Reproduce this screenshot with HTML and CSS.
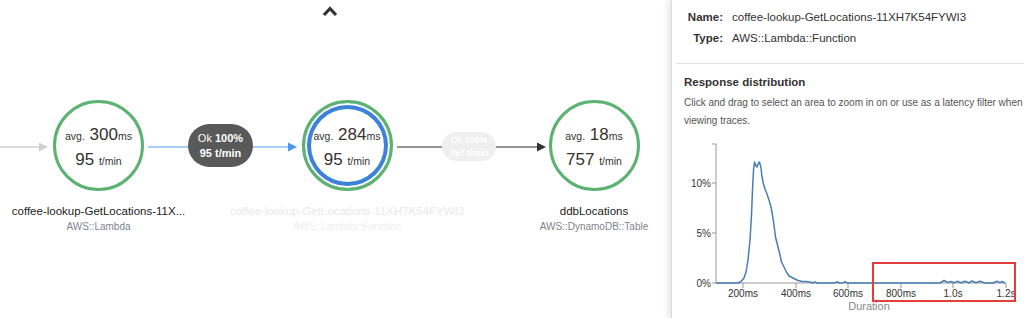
FILE: index.html
```html
<!DOCTYPE html>
<html>
<head>
  <meta charset="utf-8">
  <link rel="stylesheet" href="styles.css">
</head>
<body>
  <div class="app">
    <div class="map">
      <svg class="edges" width="671" height="318">
        <line x1="0" y1="147" x2="42" y2="147" stroke="#d2d2d2" stroke-width="1.5"/>
        <polygon points="39,142.5 48,147 39,151.5" fill="#cfcfcf"/>
        <line x1="148" y1="147" x2="290" y2="147" stroke="#a8cdf6" stroke-width="2"/>
        <polygon points="288,142.5 297,147 288,151.5" fill="#4b95ec"/>
        <line x1="397" y1="147" x2="539" y2="147" stroke="#707070" stroke-width="1.3"/>
        <polygon points="537,142.5 546,147 537,151.5" fill="#333"/>
      </svg>

      <div class="collapse">
        <svg width="16" height="12" viewBox="0 0 16 12">
          <polyline points="2,10 8,3.5 14,10" fill="none" stroke="#333" stroke-width="3.2"/>
        </svg>
      </div>

      <div class="node node-client">
        <div class="ring">
          <div class="stat"><small>avg.</small> 300<small>ms</small></div>
          <div class="stat">95 <small>t/min</small></div>
        </div>
        <div class="name">coffee-lookup-GetLocations-11X...</div>
        <div class="type">AWS::Lambda</div>
      </div>

      <div class="node node-function">
        <div class="ring ring-active">
          <div class="stat"><small>avg.</small> 284<small>ms</small></div>
          <div class="stat">95 <small>t/min</small></div>
        </div>
        <div class="name faded">coffee-lookup-GetLocations-11XH7K54FYWI3</div>
        <div class="type faded">AWS::Lambda::Function</div>
      </div>

      <div class="node node-table">
        <div class="ring">
          <div class="stat"><small>avg.</small> 18<small>ms</small></div>
          <div class="stat">757 <small>t/min</small></div>
        </div>
        <div class="name">ddbLocations</div>
        <div class="type">AWS::DynamoDB::Table</div>
      </div>

      <div class="badge badge-lambda">
        <div>Ok <b>100%</b><br><b>95 t/min</b></div>
      </div>
      <div class="badge badge-table">
        <div>Ok <b>100%</b><br><b>757 t/min</b></div>
      </div>
    </div>

    <div class="panel">
      <div class="props">
        <div class="prop-label">Name:</div>
        <div class="prop-value">coffee-lookup-GetLocations-11XH7K54FYWI3</div>
        <div class="prop-label">Type:</div>
        <div class="prop-value">AWS::Lambda::Function</div>
      </div>

      <div class="dist">
        <h3>Response distribution</h3>
        <p>Click and drag to select an area to zoom in on or use as a latency filter when viewing traces.</p>

        <svg class="chart" width="340" height="188">
          <g transform="translate(-684,-130)">
            <!-- y axis -->
            <path d="M712,144 H716 V283 H712" fill="none" stroke="#999"/>
            <line x1="712" y1="183" x2="716" y2="183" stroke="#999"/>
            <line x1="712" y1="233" x2="716" y2="233" stroke="#999"/>
            <text x="711" y="186.5" class="tick" text-anchor="end">10%</text>
            <text x="711" y="236.5" class="tick" text-anchor="end">5%</text>
            <text x="711" y="286.5" class="tick" text-anchor="end">0%</text>

            <!-- x axis -->
            <line x1="716" y1="283" x2="1006" y2="283" stroke="#999"/>
            <g stroke="#999">
              <line x1="743" y1="283" x2="743" y2="288"/>
              <line x1="796" y1="283" x2="796" y2="288"/>
              <line x1="848" y1="283" x2="848" y2="288"/>
              <line x1="901" y1="283" x2="901" y2="288"/>
              <line x1="953" y1="283" x2="953" y2="288"/>
              <line x1="1006" y1="283" x2="1006" y2="288"/>
            </g>
            <text x="743" y="297" class="tick" text-anchor="middle">200ms</text>
            <text x="796" y="297" class="tick" text-anchor="middle">400ms</text>
            <text x="848" y="297" class="tick" text-anchor="middle">600ms</text>
            <text x="901" y="297" class="tick" text-anchor="middle">800ms</text>
            <text x="953" y="297" class="tick" text-anchor="middle">1.0s</text>
            <text x="1006" y="297" class="tick" text-anchor="middle">1.2s</text>
            <text x="869" y="310" class="axis-title" text-anchor="middle">Duration</text>

            <!-- latency curve -->
            <path class="curve" d="M716,283 L738,283 L741,281.5 L744,278 L746,272 L748,260 L750,240 L751.5,215 L752.5,190 L753.5,170 L754.5,162 L756,166 L757,167 L758,164 L759.5,162 L761,168 L762,177 L763.5,184 L765,189 L767,194 L769,200 L771,207 L772.5,215 L774,225 L775.5,237 L777,243 L778.5,249 L780,255 L781.5,262 L783,265 L785,269 L787,273 L789,276 L792,277.5 L795,279 L798,280.5 L802,281.5 L806,281.5 L810,282 L813,283 L815,281.8 L817,283 L835,283 L837,281.6 L839,283 L843,283 L845,281.6 L847,283 L940,283 L944,280.5 L948,282.5 L951,281.5 L954,282.8 L957,281.3 L961,282.8 L965,281.3 L969,282.8 L972,281 L976,282.8 L980,281.3 L985,283 L993,283 L997,281.3 L1000,282.6 L1002,281.5 L1005,283"/>

            <!-- selection -->
            <rect class="selection" x="873" y="263" width="142" height="38"/>
          </g>
        </svg>
      </div>
    </div>
  </div>
</body>
</html>
```

FILE: styles.css
```css
body {
  margin: 0;
  font-family: "Liberation Sans", Arial, sans-serif;
  color: #333;
  background: #fff;
}

.app {
  display: flex;
  width: 1024px;
  height: 318px;
  overflow: hidden;
}

/* service map */

.map {
  position: relative;
  flex: 1;
}

.edges {
  position: absolute;
  left: 0;
  top: 0;
}

.collapse {
  position: absolute;
  left: 322px;
  top: 5px;
}

.collapse svg {
  display: block;
}

.node {
  position: absolute;
  top: 100px;
  width: 260px;
  display: flex;
  flex-direction: column;
  align-items: center;
}

.node-client {
  left: -31.5px;
}

.node-function {
  left: 217px;
}

.node-table {
  left: 464px;
}

.ring {
  width: 91px;
  height: 91px;
  box-sizing: border-box;
  border: 3px solid #5cb271;
  border-radius: 50%;
  background: #fff;
  display: flex;
  flex-direction: column;
  align-items: center;
  justify-content: center;
  padding-top: 5px;
}

.ring-active {
  box-shadow: inset 0 0 0 2px #fff, inset 0 0 0 6px #3b82d8;
}

.stat {
  font-size: 17px;
  line-height: 24px;
  color: #333;
  white-space: nowrap;
}

.stat small {
  font-size: 10.5px;
}

.name {
  margin-top: 12px;
  font-size: 11.5px;
  line-height: 16px;
  color: #222;
  white-space: nowrap;
}

.type {
  font-size: 10px;
  line-height: 16px;
  color: #7f848c;
  white-space: nowrap;
}

.name.faded {
  color: #e9e9e9;
}

.type.faded {
  color: #eeeeee;
}

.badge {
  position: absolute;
  box-sizing: border-box;
  text-align: center;
  color: #fff;
  display: flex;
  align-items: center;
  justify-content: center;
  white-space: nowrap;
}

.badge-lambda {
  left: 188px;
  top: 124px;
  width: 65px;
  height: 43px;
  border-radius: 22px;
  background: #595959;
  font-size: 11px;
  line-height: 15px;
}

.badge-table {
  left: 442px;
  top: 132px;
  width: 54px;
  height: 29px;
  border-radius: 15px;
  background: #efefef;
  font-size: 9px;
  line-height: 13px;
}

/* details panel */

.panel {
  width: 353px;
  flex: none;
  box-sizing: border-box;
  border-left: 1px solid #dcdcdc;
  box-shadow: -3px 0 6px rgba(0, 0, 0, 0.1);
  background: #fff;
}

.props {
  display: grid;
  grid-template-columns: 47px auto;
  column-gap: 9px;
  margin-left: 4px;
  padding: 7px 0 14px;
  border-bottom: 1px solid #e2e2e2;
  font-size: 11.5px;
  line-height: 21px;
}

.prop-label {
  font-weight: bold;
  text-align: right;
}

.prop-value {
  white-space: nowrap;
}

.dist {
  padding: 0 0 0 12px;
}

.dist h3 {
  margin: 10px 0 0;
  font-size: 11.5px;
  line-height: 16px;
  color: #333;
}

.dist p {
  margin: 4px -8px 0 0;
  font-size: 10px;
  line-height: 18px;
  color: #555;
}

.chart {
  display: block;
}

.tick {
  font-size: 10px;
  fill: #333;
}

.axis-title {
  font-size: 11px;
  fill: #888;
}

.curve {
  fill: none;
  stroke: #4a7db3;
  stroke-width: 1.5;
  stroke-linejoin: round;
}

.selection {
  fill: none;
  stroke: #e53d3d;
  stroke-width: 2;
}
```
